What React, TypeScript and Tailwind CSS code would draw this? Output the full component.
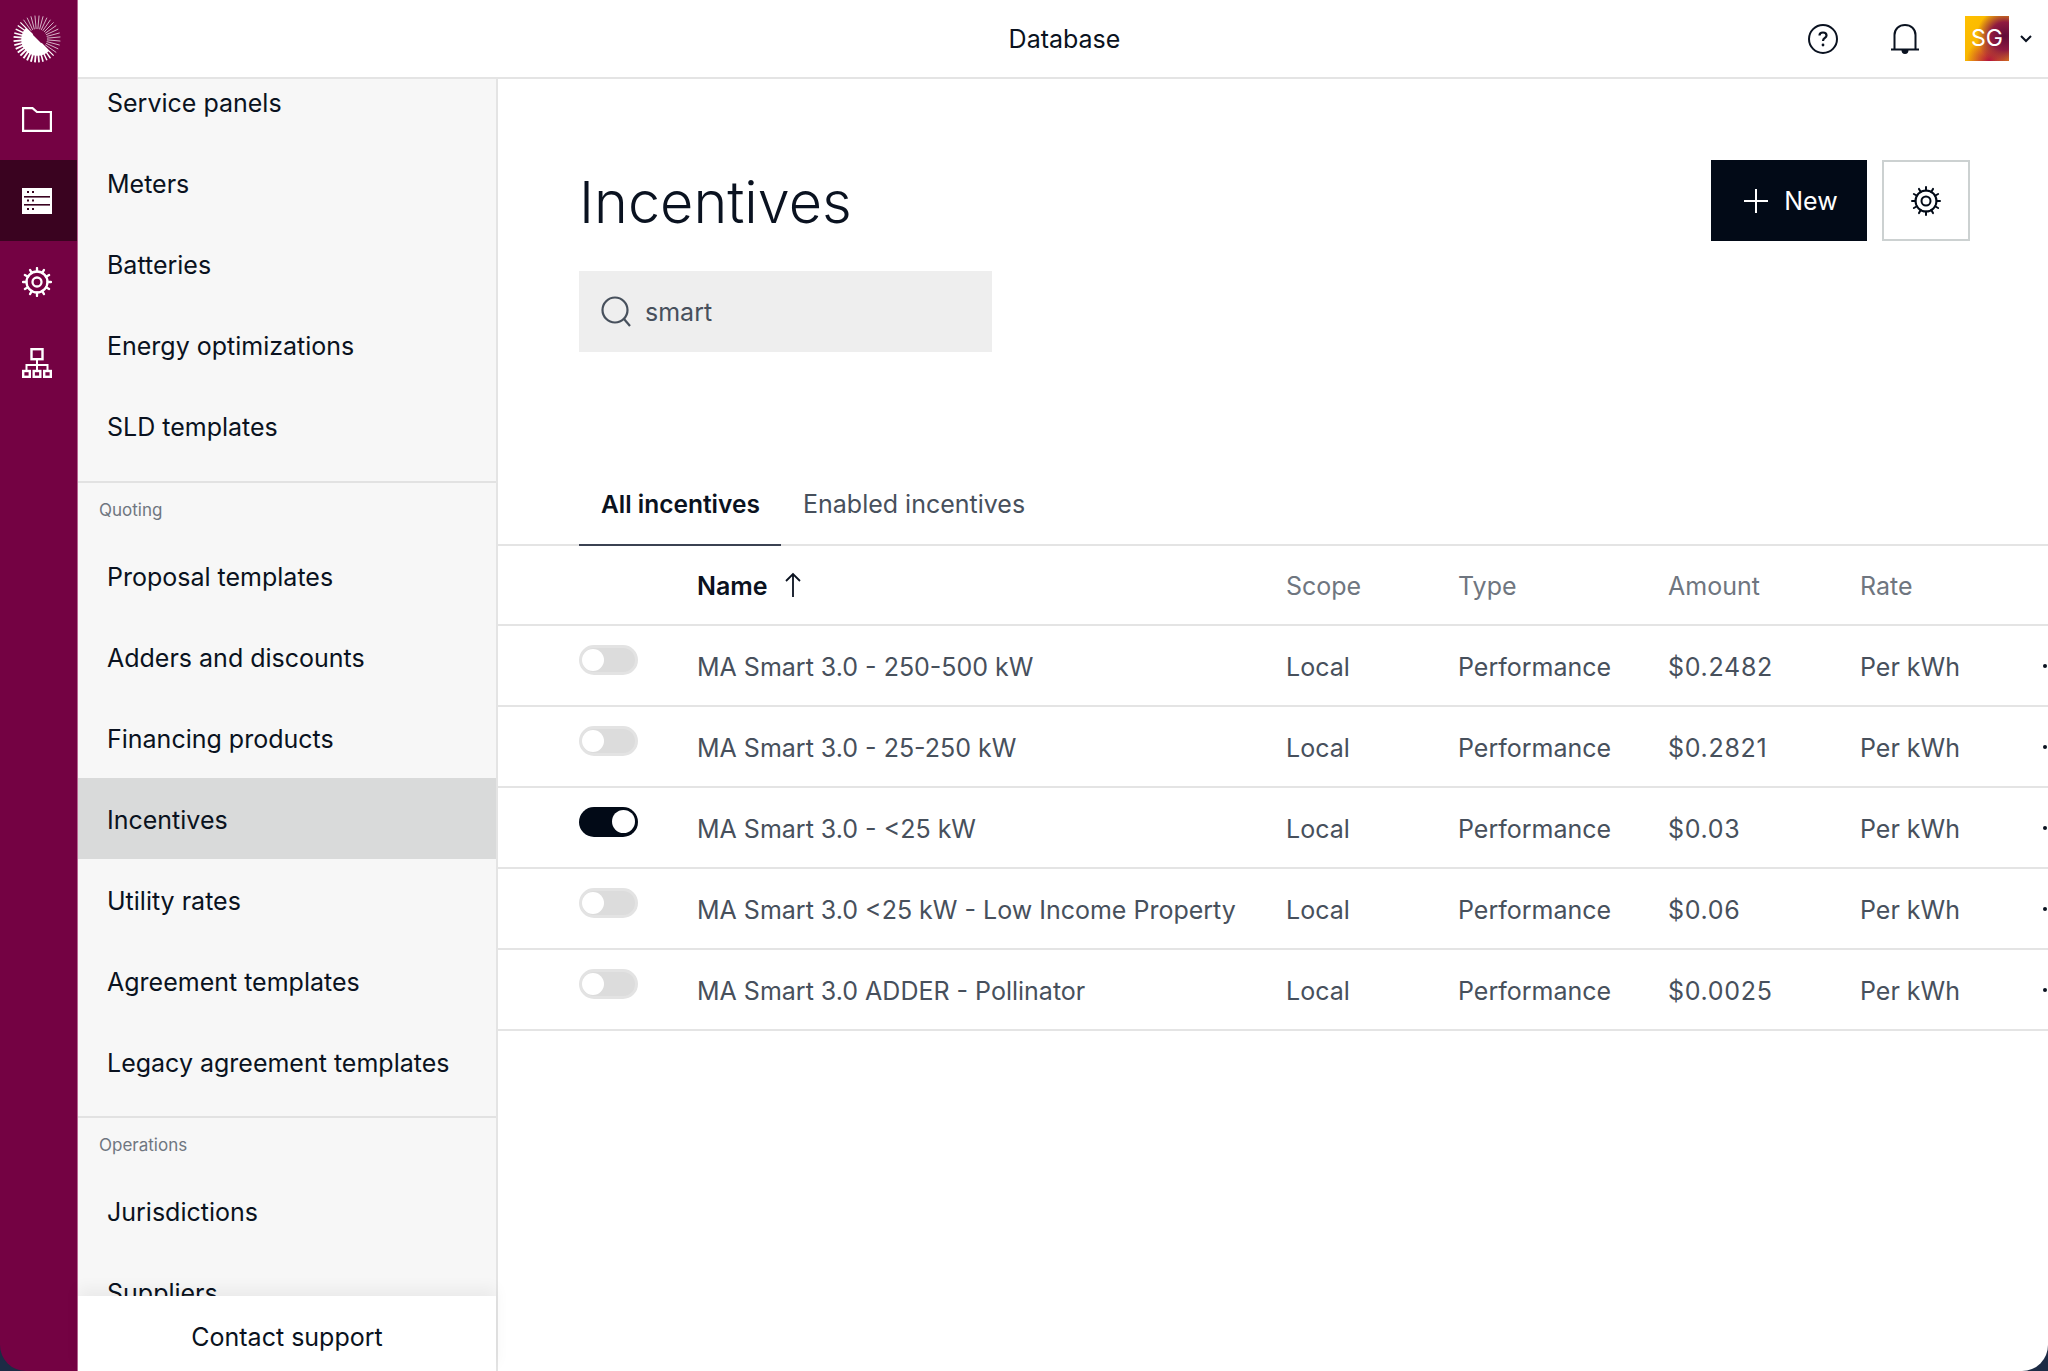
import React from 'react';

const FONT = "font-['Inter',sans-serif]";

const groups = [
  { label: null, items: ['Service panels', 'Meters', 'Batteries', 'Energy optimizations', 'SLD templates'] },
  { label: 'Quoting', items: ['Proposal templates', 'Adders and discounts', 'Financing products', 'Incentives', 'Utility rates', 'Agreement templates', 'Legacy agreement templates'] },
  { label: 'Operations', items: ['Jurisdictions', 'Suppliers'] },
];

const rows = [
  { name: 'MA Smart 3.0 - 250-500 kW', amount: '$0.2482', on: false },
  { name: 'MA Smart 3.0 - 25-250 kW', amount: '$0.2821', on: false },
  { name: 'MA Smart 3.0 - <25 kW', amount: '$0.03', on: true },
  { name: 'MA Smart 3.0 <25 kW - Low Income Property', amount: '$0.06', on: false },
  { name: 'MA Smart 3.0 ADDER - Pollinator', amount: '$0.0025', on: false },
];

function Logo() {
  const rays = Array.from({ length: 36 }, (_, i) => {
    const a = ((i * 10 + 5) * Math.PI) / 180;
    // rays on the lower-left are heavy, the upper-right ones are thin and dim
    const weight = Math.cos(a - (3 * Math.PI) / 4);
    const heavy = weight > 0;
    const r0 = heavy ? 6 : 10;
    return (
      <line
        key={i}
        x1={24 + r0 * Math.cos(a)}
        y1={24 + r0 * Math.sin(a)}
        x2={24 + 23.5 * Math.cos(a)}
        y2={24 + 23.5 * Math.sin(a)}
        stroke="#fff"
        strokeWidth={heavy ? 1.2 + weight * 0.8 : 1}
        opacity={heavy ? 1 : 0.7}
      />
    );
  });
  return (
    <svg width="48" height="48" viewBox="0 0 48 48" fill="none">
      {rays}
      <path d="M13 13 L36 36 A16 16 0 0 1 13 13 Z" fill="#fff" />
    </svg>
  );
}

function Folder() {
  return (
    <svg width="30" height="25" viewBox="0 0 30 25" fill="none" stroke="#fff" strokeWidth="2.2">
      <path d="M1.1 1.1 H10.5 L15 5 H28.9 V23.9 H1.1 Z" />
    </svg>
  );
}

function TableIcon() {
  return (
    <svg width="30" height="26" viewBox="0 0 30 26">
      <rect width="30" height="26" fill="#fff" />
      <g fill="#3a0320">
        <rect x="2" y="8" width="26" height="1.6" />
        <rect x="2" y="16" width="26" height="1.6" />
        <rect x="5" y="3" width="2" height="2" />
        <rect x="10" y="3" width="2" height="2" />
        <rect x="5" y="11.5" width="2" height="2" />
        <rect x="10" y="11.5" width="2" height="2" />
        <rect x="5" y="20" width="2" height="2" />
        <rect x="10" y="20" width="2" height="2" />
      </g>
    </svg>
  );
}

function Gear({ color = '#fff', size = 30, stroke = 2.3 }: { color?: string; size?: number; stroke?: number }) {
  const teeth = Array.from({ length: 12 }, (_, i) => {
    const a = (i * 30 * Math.PI) / 180;
    return (
      <line
        key={i}
        x1={15 + 10.5 * Math.cos(a)}
        y1={15 + 10.5 * Math.sin(a)}
        x2={15 + 14 * Math.cos(a)}
        y2={15 + 14 * Math.sin(a)}
        strokeLinecap="round"
      />
    );
  });
  return (
    <svg width={size} height={size} viewBox="0 0 30 30" fill="none" stroke={color} strokeWidth={stroke}>
      <circle cx="15" cy="15" r="10.5" />
      <circle cx="15" cy="15" r="4.5" />
      {teeth}
    </svg>
  );
}

function Tree() {
  return (
    <svg width="30" height="30" viewBox="0 0 30 30" fill="none" stroke="#fff" strokeWidth="2.4">
      <rect x="9.5" y="1.2" width="11" height="10" />
      <path d="M15 11 V23 M4.5 23 V17 H25.5 V23" strokeWidth="2" />
      <rect x="1.2" y="23" width="6.6" height="5.8" />
      <rect x="11.7" y="23" width="6.6" height="5.8" />
      <rect x="22.2" y="23" width="6.6" height="5.8" />
    </svg>
  );
}

function Toggle({ on }: { on: boolean }) {
  if (on) {
    return (
      <div className="flex h-[30px] w-[59px] items-center justify-end rounded-full bg-[#020a17] pr-[3px]">
        <div className="h-[23px] w-[23px] rounded-full bg-white" />
      </div>
    );
  }
  return (
    <div className="flex h-[30px] w-[59px] items-center rounded-full border-[3px] border-[#e3e3e3] bg-[#dcdcdc]">
      <div className="h-[22px] w-[22px] rounded-full bg-white" />
    </div>
  );
}

const colName = 'w-[589px] shrink-0';
const colScope = 'w-[172px] shrink-0';
const colType = 'w-[210px] shrink-0';
const colAmount = 'w-[192px] shrink-0';
const colRate = 'w-[183px] shrink-0';

export default function App() {
  return (
    <div className={`${FONT} h-[1371px] w-[2048px] overflow-hidden bg-[#1c2b45]`}>
      <div className="flex h-full w-full overflow-hidden rounded-b-[26px]">
        {/* Rail */}
        <aside className="flex w-[78px] shrink-0 flex-col border-r border-[#b5648f] bg-[#740243]">
          <div className="flex h-[78px] items-center justify-center pr-[3px]">
            <Logo />
          </div>
          <div className="flex h-[82px] items-center justify-center pr-[3px]"><Folder /></div>
          <div className="flex h-[81px] items-center justify-center bg-[#3a0320] pr-[3px]"><TableIcon /></div>
          <div className="flex h-[81px] items-center justify-center pr-[3px]"><Gear /></div>
          <div className="flex h-[81px] items-center justify-center pr-[3px]"><Tree /></div>
        </aside>

        <div className="flex min-w-0 flex-1 flex-col bg-white">
          {/* Top bar */}
          <header className="relative flex h-[79px] shrink-0 items-center justify-center border-b-2 border-[#e4e4e4]">
            <span className="pl-[3px] pt-[3px] text-[25px] text-[#0a1220]">Database</span>
            <div className="absolute right-[15px] top-[16px] flex items-center">
              <svg className="mr-[51px]" width="32" height="32" viewBox="0 0 32 32" fill="none" stroke="#0a1220" strokeWidth="2">
                <circle cx="16" cy="16" r="14" />
                <path d="M12.5 12.5 C12.5 10.5 14 9.5 16 9.5 C18 9.5 19.5 10.7 19.5 12.5 C19.5 15 16 15 16 18" strokeWidth="2.2" />
                <circle cx="16" cy="22" r="1.4" fill="#0a1220" stroke="none" />
              </svg>
              <svg className="mr-[45px]" width="30" height="32" viewBox="0 0 30 32" fill="none" stroke="#0a1220" strokeWidth="2">
                <path d="M1 26.5 H29 M4.5 26.5 V12 C4.5 6 9 2 15 2 C21 2 25.5 6 25.5 12 V26.5" />
                <path d="M12.5 27 C12.5 31 17.5 31 17.5 27 Z" fill="#0a1220" />
              </svg>
              <div className="flex h-[45px] w-[44px] items-center justify-center bg-[radial-gradient(circle_at_90%_45%,#5f0a38_0%,#8f1a40_30%,transparent_60%),radial-gradient(circle_at_55%_100%,#b3123f_0%,transparent_45%),linear-gradient(135deg,#ffc000_0%,#f8b600_50%,#ee9a10_100%)] text-[23px] leading-none text-white">
                SG
              </div>
              <svg className="ml-[10px]" width="14" height="10" viewBox="0 0 14 10" fill="none" stroke="#0a1220" strokeWidth="2">
                <path d="M2 2 L7 7 L12 2" />
              </svg>
            </div>
          </header>

          <div className="flex min-h-0 flex-1">
            {/* Sidebar */}
            <nav className="flex w-[420px] shrink-0 flex-col border-r-2 border-[#e4e4e4] bg-[#f7f7f7]">
              <div className="min-h-0 flex-1 overflow-hidden">
                <div className="mt-[-18px]">
                  {groups.map((group, g) => (
                    <div key={g} className={g > 0 ? 'border-t-2 border-[#e2e2e2] pb-[14px]' : 'pb-[15px]'}>
                      {group.label && (
                        <div className="flex h-[52px] items-end pb-[12px] pl-[21px] text-[17px] text-[#6f7680]">{group.label}</div>
                      )}
                      {group.items.map((item) => (
                        <div
                          key={item}
                          className={`flex h-[81px] items-center pl-[29px] pt-[5px] text-[25px] text-[#0a1220] ${item === 'Incentives' ? 'bg-[#d9dada]' : ''}`}
                        >
                          {item}
                        </div>
                      ))}
                    </div>
                  ))}
                </div>
              </div>
              <div className="relative flex h-[75px] shrink-0 items-center justify-center bg-white pt-[8px] text-[25px] text-[#0a1220] shadow-[0_-8px_14px_rgba(0,0,0,0.05)]">
                Contact support
              </div>
            </nav>

            {/* Main */}
            <main className="min-w-0 flex-1 overflow-hidden">
              <div className="flex items-start justify-between pl-[81px] pr-[78px] pt-[81px]">
                <div>
                  <h1 className="h-[111px] text-[57.5px] leading-[84px] font-light text-[#0a1220]">Incentives</h1>
                  <div className="flex h-[81px] w-[413px] items-center bg-[#eeeeee] pl-[22px]">
                    <svg width="30" height="32" viewBox="0 0 30 32" fill="none" stroke="#47505c" strokeWidth="2.2">
                      <circle cx="14" cy="14" r="12.5" />
                      <path d="M23 23 L29 30" />
                    </svg>
                    <span className="ml-[14px] pt-[2px] text-[25px] text-[#47505c]">smart</span>
                  </div>
                </div>
                <div className="flex gap-[15px]">
                  <div className="flex h-[81px] w-[156px] items-center justify-center gap-[15px] bg-[#020a17] pl-[3px] text-[25px] text-white">
                    <svg width="26" height="26" viewBox="0 0 26 26" stroke="#fff" strokeWidth="2">
                      <path d="M13 1 V25 M1 13 H25" />
                    </svg>
                    <span className="pt-[2px]">New</span>
                  </div>
                  <div className="flex h-[81px] w-[88px] items-center justify-center border-2 border-[#ccd1d1] bg-white">
                    <Gear color="#020a17" size={30} stroke={2} />
                  </div>
                </div>
              </div>

              {/* Tabs */}
              <div className="mt-[112px] flex h-[82px] border-b-2 border-[#e4e4e4] pl-[81px]">
                <div className="flex h-[82px] w-[202px] items-center border-b-2 border-[#3b4252] pl-[22px] pt-[1px] text-[24.5px] font-semibold whitespace-nowrap text-[#0a1220]">All incentives</div>
                <div className="flex h-[80px] items-center pl-[22px] pt-[1px] text-[25px] text-[#47505c]">Enabled incentives</div>
              </div>

              {/* Table */}
              <div className="flex h-[80px] items-center border-b-2 border-[#e4e4e4] pl-[199px] pt-[3px] text-[25px] text-[#6f7680]">
                <div className={`${colName} flex items-center gap-[16px] font-semibold text-[#0a1220]`}>
                  Name
                  <svg className="mb-[3px]" width="18" height="26" viewBox="0 0 18 26" fill="none" stroke="#0a1220" strokeWidth="1.8">
                    <path d="M9 25 V2 M2 9 L9 2 L16 9" />
                  </svg>
                </div>
                <div className={colScope}>Scope</div>
                <div className={colType}>Type</div>
                <div className={colAmount}>Amount</div>
                <div className={colRate}>Rate</div>
              </div>
              {rows.map((row) => (
                <div key={row.name} className="relative flex h-[81px] items-center border-b-2 border-[#e4e4e4] pt-[5px] text-[25px] text-[#47505c]">
                  <div className="w-[199px] shrink-0 pb-[17px] pl-[81px]">
                    <Toggle on={row.on} />
                  </div>
                  <div className={colName}>{row.name}</div>
                  <div className={colScope}>Local</div>
                  <div className={colType}>Performance</div>
                  <div className={`${colAmount} tracking-[0.7px]`}>{row.amount}</div>
                  <div className={colRate}>Per kWh</div>
                  <div className="mb-[5px] h-[4px] w-[4px] shrink-0 rounded-full bg-[#0a1220]" />
                </div>
              ))}
            </main>
          </div>
        </div>
      </div>
    </div>
  );
}
